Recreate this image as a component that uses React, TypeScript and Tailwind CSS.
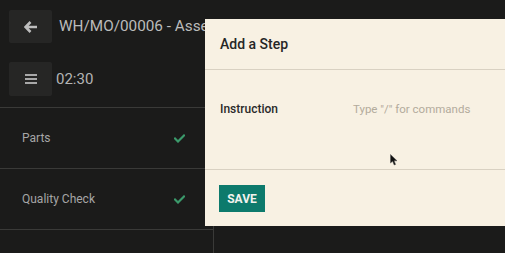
import React from "react";

function Check() {
  return (
    <svg width="11" height="9" viewBox="0 0 11 9" fill="none">
      <path d="M1 4.5 L4 7.5 L10 1.5" stroke="#3b9a6b" strokeWidth="2.2" strokeLinecap="square" />
    </svg>
  );
}

export default function App() {
  return (
    <div
      className="relative w-[505px] h-[253px] overflow-hidden bg-[#1b1b1a] text-[#bdbdbd]"
      style={{ fontFamily: "Roboto, 'Noto Sans', sans-serif" }}
    >
      {/* Header */}
      <div className="flex flex-col gap-[19px] pl-[9px] pt-[10px] h-[108px] border-b border-[#3a3a38]">
        <div className="flex items-center gap-[7px]">
          <div className="w-[43px] h-[33px] bg-[#262625] rounded-[2px] flex items-center justify-center">
            <svg width="14" height="12" viewBox="0 0 14 12" fill="none">
              <path d="M6.5 1 L1.5 6 L6.5 11 M1.8 6 H13" stroke="#bdbdbd" strokeWidth="2.6" strokeLinejoin="miter" />
            </svg>
          </div>
          <span className="text-[15.3px] text-[#bcbcbc] whitespace-nowrap">WH/MO/00006 - Assembly</span>
        </div>
        <div className="flex items-center gap-[4px]">
          <div className="w-[43px] h-[34px] bg-[#262625] rounded-[2px] flex items-center justify-center">
            <svg width="12" height="10" viewBox="0 0 12 10">
              <rect x="0" y="0" width="12" height="2" fill="#a8a8a8" />
              <rect x="0" y="4" width="12" height="2" fill="#a8a8a8" />
              <rect x="0" y="8" width="12" height="2" fill="#a8a8a8" />
            </svg>
          </div>
          <span className="text-[15px] text-[#b4b4b4]">02:30</span>
        </div>
      </div>

      {/* Body */}
      <div className="flex">
        <div className="w-[214px] border-r border-[#3a3a38]">
          <div className="h-[61px] flex items-center justify-between pl-[22px] pr-[28px] border-b border-[#3a3a38]">
            <span className="text-[12px] text-[#a6a6a6]">Parts</span>
            <Check />
          </div>
          <div className="h-[61px] flex items-center justify-between pl-[22px] pr-[28px] border-b border-[#3a3a38]">
            <span className="text-[12px] text-[#a6a6a6]">Quality Check</span>
            <Check />
          </div>
          <div className="h-[61px]" />
        </div>
        <div className="flex-1" />
      </div>

      {/* Dialog */}
      <div className="absolute left-[205px] top-[19px] w-[310px] h-[207px] bg-[#f8f1e3] flex flex-col text-[#222]">
        <div className="h-[51px] flex items-center pl-[15px] border-b border-[#d9d1c2]">
          <span className="text-[14px] font-medium text-[#262626]">Add a Step</span>
        </div>
        <div className="h-[100px] border-b border-[#d9d1c2] pl-[15px] pt-[30px] flex">
          <span className="w-[133px] text-[12px] font-medium text-[#2a2a2a]">Instruction</span>
          <span className="text-[11.5px] pt-[1px] text-[#b3ab9c]">Type "/" for commands</span>
        </div>
        <div className="flex-1 pl-[14px] pt-[15px]">
          <div className="w-[46px] h-[27px] bg-[#0d7a6c] flex items-center justify-center">
            <span className="text-[12px] font-bold text-[#f2f2ee]">SAVE</span>
          </div>
        </div>
      </div>

      {/* Cursor */}
      <svg className="absolute left-[390px] top-[154px]" width="8" height="12" viewBox="0 0 8 12">
        <path d="M0.5 0.5 L0.5 9 L2.6 7.2 L4.2 11 L5.6 10.4 L4.1 6.8 L7 6.8 Z" fill="#111" stroke="#555" strokeWidth="0.5" />
      </svg>
    </div>
  );
}
